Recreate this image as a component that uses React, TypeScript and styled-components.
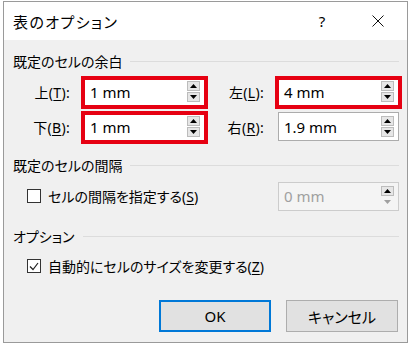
import React from 'react'
import styled, { createGlobalStyle } from 'styled-components'

const GlobalStyle = createGlobalStyle`
    html, body {
        margin: 0;
        padding: 0;
        background: #ffffff;
    }
    body {
        font-family: "Noto Sans", "Noto Sans CJK JP", sans-serif;
        font-size: 14px;
        color: #000;
        font-feature-settings: "palt";
    }
`

const Dialog = styled.div`
    box-sizing: border-box;
    margin: 1px 0 0 3px;
    width: 405px;
    height: 342px;
    border: 1px solid #9a9a9a;
    display: flex;
    flex-direction: column;
    background: #f0f0f0;
`

const TitleBar = styled.div`
    height: 38px;
    background: #ffffff;
    display: flex;
    align-items: center;
    padding-left: 9px;
`

const Title = styled.span`
    flex: 1;
    font-size: 15px;
    letter-spacing: 1.4px;
`

const TitleButton = styled.span<{ $mr?: number }>`
    width: 46px;
    display: flex;
    justify-content: center;
    align-items: center;
    font-size: 15px;
    margin-right: ${(p) => p.$mr ?? 0}px;
`

const Body = styled.div`
    flex: 1;
    padding: 11px 8px 0 9px;
    display: flex;
    flex-direction: column;
`

const GroupHeader = styled.div<{ $mt: number }>`
    height: 20px;
    margin-top: ${(p) => p.$mt}px;
    display: flex;
    align-items: center;
    gap: 8px;

    &::after {
        content: '';
        flex: 1;
        height: 1px;
        background: #dcdcdc;
    }
`

const MarginGrid = styled.div`
    margin-top: 6px;
    padding-left: 14px;
    display: grid;
    grid-template-columns: 43px 121px 45px 121px;
    grid-auto-rows: 29px;
    column-gap: 14px;
    row-gap: 6px;
    align-items: center;
`

const Label = styled.span`
    text-align: right;
    white-space: nowrap;
    font-size: 14px;
    letter-spacing: 0.3px;
`

const Key = styled.span`
    text-decoration: underline;
    text-underline-offset: 2px;
`

const Field = styled.div<{ $disabled?: boolean }>`
    position: relative;
    box-sizing: border-box;
    width: 121px;
    height: 29px;
    border: 1px solid ${(p) => (p.$disabled ? '#cccccc' : '#acacac')};
    background: ${(p) => (p.$disabled ? '#f4f4f4' : '#ffffff')};
    color: ${(p) => (p.$disabled ? '#a0a0a0' : '#000')};
    display: flex;
    align-items: center;
    padding: 0 4px 0 5px;
`

const FieldText = styled.span`
    flex: 1;
    font-size: 15px;
`

const Highlight = styled.span`
    position: absolute;
    top: -2px;
    bottom: -4px;
    left: -4px;
    right: -4px;
    border: 4px solid #e60012;
    pointer-events: none;
`

const Spinner = styled.div`
    width: 13px;
    display: flex;
    flex-direction: column;
    gap: 1px;
`

const SpinButton = styled.div<{ $flat?: boolean }>`
    box-sizing: border-box;
    height: 10px;
    border: 1px solid ${(p) => (p.$flat ? 'transparent' : '#bcbcbc')};
    background: ${(p) => (p.$flat ? 'transparent' : '#e6e6e6')};
    display: flex;
    align-items: center;
    justify-content: center;
`

const CheckRow = styled.div<{ $mt: number; $h: number }>`
    margin-top: ${(p) => p.$mt}px;
    height: ${(p) => p.$h}px;
    padding-left: 14px;
    display: flex;
    align-items: center;
    justify-content: space-between;
`

const CheckLabel = styled.label`
    display: flex;
    align-items: center;
    gap: 7px;
    font-size: 14px;
`

const Box = styled.span`
    box-sizing: border-box;
    width: 14px;
    height: 14px;
    border: 1px solid #333333;
    background: #ffffff;
    display: flex;
    align-items: center;
    justify-content: center;
`

const ButtonRow = styled.div`
    margin-top: 22px;
    display: flex;
    justify-content: flex-end;
    gap: 15px;
    padding-right: 1px;
`

const Button = styled.div<{ $primary?: boolean }>`
    box-sizing: border-box;
    width: 112px;
    height: 32px;
    background: #e1e1e1;
    border: ${(p) => (p.$primary ? '2px solid #0078d7' : '1px solid #adadad')};
    display: flex;
    align-items: center;
    justify-content: center;
    font-size: 15px;
`

function Arrow({ up, color = '#000' }: { up?: boolean; color?: string }) {
    return (
        <svg width="7" height="4" viewBox="0 0 7 4">
            <polygon points={up ? '3.5,0 7,4 0,4' : '0,0 7,0 3.5,4'} fill={color} />
        </svg>
    )
}

function SpinBox({ value, highlight, disabled }: { value: string; highlight?: boolean; disabled?: boolean }) {
    return (
        <Field $disabled={disabled}>
            <FieldText>{value}</FieldText>
            <Spinner>
                <SpinButton><Arrow up /></SpinButton>
                <SpinButton $flat={disabled}><Arrow color={disabled ? '#a0a0a0' : '#000'} /></SpinButton>
            </Spinner>
            {highlight && <Highlight />}
        </Field>
    )
}

function CheckBox({ checked }: { checked?: boolean }) {
    return (
        <Box>
            {checked && (
                <svg width="10" height="9" viewBox="0 0 10 9">
                    <polyline points="1,4.5 4,7.5 9,1" fill="none" stroke="#222" strokeWidth="1.2" />
                </svg>
            )}
        </Box>
    )
}

function App() {
    return (
        <>
            <GlobalStyle />
            <Dialog>
                <TitleBar>
                    <Title>表のオプション</Title>
                    <TitleButton $mr={10}>?</TitleButton>
                    <TitleButton $mr={6}>
                        <svg width="12" height="12" viewBox="0 0 12 12">
                            <path d="M0.5 0.5 L11.5 11.5 M11.5 0.5 L0.5 11.5" stroke="#111" strokeWidth="1" />
                        </svg>
                    </TitleButton>
                </TitleBar>
                <Body>
                    <GroupHeader $mt={0}>既定のセルの余白</GroupHeader>
                    <MarginGrid>
                        <Label>上(<Key>T</Key>):</Label>
                        <SpinBox value="1 mm" highlight />
                        <Label>左(<Key>L</Key>):</Label>
                        <SpinBox value="4 mm" highlight />
                        <Label>下(<Key>B</Key>):</Label>
                        <SpinBox value="1 mm" highlight />
                        <Label>右(<Key>R</Key>):</Label>
                        <SpinBox value="1.9 mm" />
                    </MarginGrid>

                    <GroupHeader $mt={14}>既定のセルの間隔</GroupHeader>
                    <CheckRow $mt={7} $h={28}>
                        <CheckLabel>
                            <CheckBox />
                            <span>セルの間隔を指定する(<Key>S</Key>)</span>
                        </CheckLabel>
                        <SpinBox value="0 mm" disabled />
                    </CheckRow>

                    <GroupHeader $mt={16}>オプション</GroupHeader>
                    <CheckRow $mt={8} $h={24}>
                        <CheckLabel>
                            <CheckBox checked />
                            <span>自動的にセルのサイズを変更する(<Key>Z</Key>)</span>
                        </CheckLabel>
                    </CheckRow>

                    <ButtonRow>
                        <Button $primary>OK</Button>
                        <Button>キャンセル</Button>
                    </ButtonRow>
                </Body>
            </Dialog>
        </>
    )
}

export default App
